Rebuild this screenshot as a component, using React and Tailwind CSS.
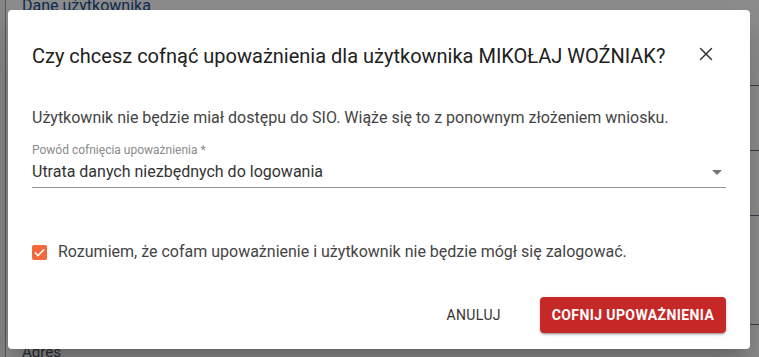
import { X } from 'lucide-react';

const App = () => {
  return (
    <div className="relative w-[759px] h-[357px] overflow-hidden bg-white font-['Roboto',sans-serif]">
      {/* page behind the dialog */}
      <div className="absolute inset-0 flex">
        <div className="w-[6px] border-r border-gray-400 bg-gray-100" />
        <div className="flex-1 flex flex-col justify-between px-4">
          <div className="-mt-[6px] text-[16px] text-[#1d4f91]">Dane użytkownika</div>
          <div className="-mb-[6px] text-[15px] text-gray-600">Adres</div>
        </div>
      </div>
      <div className="absolute right-0 top-0 w-[10px] h-full flex flex-col">
        <div className="h-[86px] border-b border-gray-500" />
        <div className="h-[65px] border-b border-gray-500" />
        <div className="h-[65px] border-b border-gray-500" />
        <div className="h-[109px] border-b border-gray-500" />
      </div>
      <div className="absolute inset-0 bg-black/45" />

      {/* dialog */}
      <div className="absolute left-[8px] top-[10px] w-[742px] h-[339px] bg-white rounded-[4px] shadow-[0_11px_15px_-7px_rgba(0,0,0,0.2),0_24px_38px_3px_rgba(0,0,0,0.14)] px-6 pt-[30px] pb-4 flex flex-col">
        <div className="flex items-center justify-between h-8">
          <h2 className="text-[20px] leading-8 text-[#212121]">
            Czy chcesz cofnąć upoważnienia dla użytkownika MIKOŁAJ WOŹNIAK?
          </h2>
          <button className="w-10 h-10 flex items-center justify-center text-[#333] -mt-[4px]">
            <X className="w-[22px] h-[22px]" strokeWidth={1.6} />
          </button>
        </div>

        <p className="mt-[34px] text-[16px] leading-6 text-[#444]">
          Użytkownik nie będzie miał dostępu do SIO. Wiąże się to z ponownym złożeniem wniosku.
        </p>

        <div className="mt-3">
          <label className="block text-[12px] leading-4 text-[#8a8a8a]">Powód cofnięcia upoważnienia *</label>
          <div className="mt-[2px] flex items-center justify-between border-b border-[#949494] pb-[3px]">
            <span className="text-[16px] leading-6 text-[#333]">Utrata danych niezbędnych do logowania</span>
            <svg width="10" height="5" viewBox="0 0 10 5" className="mr-[4px]">
              <path d="M0 0 L10 0 L5 5 Z" fill="#757575" />
            </svg>
          </div>
        </div>

        <label className="mt-[52px] flex items-center h-6 gap-[11px]">
          <span className="w-[15px] h-[15px] rounded-[2px] bg-[#f26a3b] flex items-center justify-center">
            <svg width="11" height="9" viewBox="0 0 11 9">
              <path d="M1 4.5 L4 7.5 L10 1.5" stroke="white" strokeWidth="1.6" fill="none" />
            </svg>
          </span>
          <span className="text-[16px] leading-6 text-[#444]">
            Rozumiem, że cofam upoważnienie i użytkownik nie będzie mógł się zalogować.
          </span>
        </label>

        <div className="mt-[33px] flex justify-end items-center gap-[31px]">
          <button className="h-9 px-2 text-[14px] font-normal tracking-[0.4px] text-[#333] uppercase">
            Anuluj
          </button>
          <button className="h-9 w-[186px] rounded-[4px] bg-[#c62828] text-white text-[14px] font-bold tracking-[0.4px] uppercase shadow-[0_3px_1px_-2px_rgba(0,0,0,0.2),0_2px_2px_0_rgba(0,0,0,0.14),0_1px_5px_0_rgba(0,0,0,0.12)]">
            Cofnij upoważnienia
          </button>
        </div>
      </div>
    </div>
  );
};

export default App;
